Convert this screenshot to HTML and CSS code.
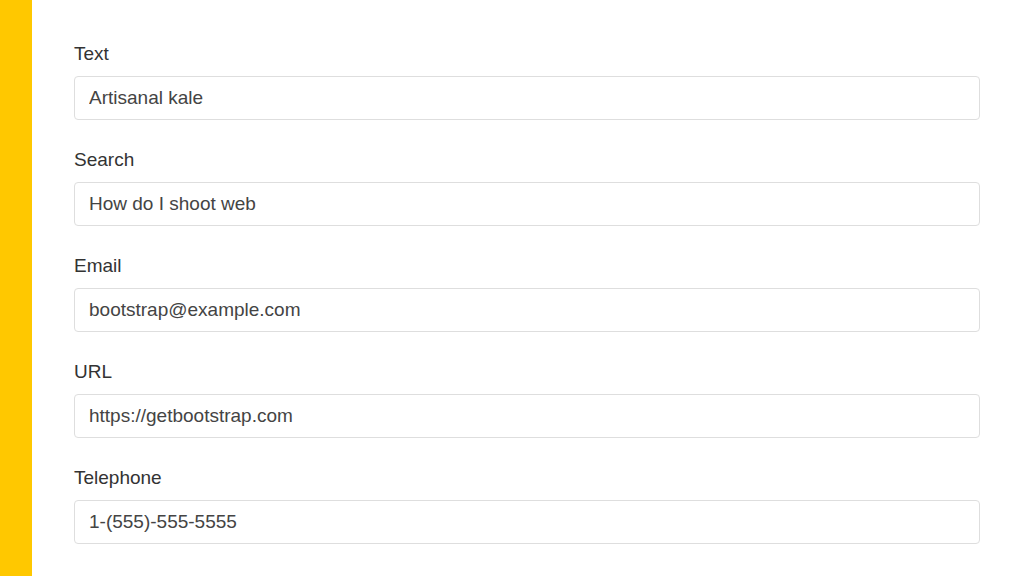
FILE: index.html
```html
<!DOCTYPE html>
<html lang="en">
<head>
    <meta charset="UTF-8">
    <meta name="viewport" content="width=device-width, initial-scale=1.0">
    <title>Form Inputs</title>
    <link rel="stylesheet" href="styles.css">
</head>
<body>
    <div class="page">
        <div class="side-bar"></div>
        <form class="form">
            <div class="form-group">
                <label for="text">Text</label>
                <input type="text" id="text" value="Artisanal kale">
            </div>
            <div class="form-group">
                <label for="search">Search</label>
                <input type="search" id="search" value="How do I shoot web">
            </div>
            <div class="form-group">
                <label for="email">Email</label>
                <input type="email" id="email" value="bootstrap@example.com">
            </div>
            <div class="form-group">
                <label for="url">URL</label>
                <input type="url" id="url" value="https://getbootstrap.com">
            </div>
            <div class="form-group">
                <label for="tel">Telephone</label>
                <input type="tel" id="tel" value="1-(555)-555-5555">
            </div>
        </form>
    </div>
</body>
</html>
```

FILE: styles.css
```css
body {
    font-family: "Liberation Sans", Arial, sans-serif;
    background-color: #ffffff;
    color: #333333;
    margin: 0;
    padding: 0;
}

.page {
    display: flex;
    height: 576px;
    overflow: hidden;
}

.side-bar {
    width: 32px;
    flex-shrink: 0;
    background-color: #ffc800;
}

.form {
    flex: 1;
    padding: 42px 44px 0 42px;
    display: flex;
    flex-direction: column;
    gap: 28px;
}

.form-group {
    display: flex;
    flex-direction: column;
}

label {
    font-size: 19px;
    line-height: 24px;
    margin-bottom: 10px;
    color: #333333;
}

input {
    box-sizing: border-box;
    height: 44px;
    padding: 0 14px;
    font-family: inherit;
    font-size: 19px;
    color: #444444;
    border: 1px solid #dedede;
    border-radius: 4px;
    background-color: #ffffff;
    outline: none;
    -webkit-appearance: none;
    appearance: none;
}
```
